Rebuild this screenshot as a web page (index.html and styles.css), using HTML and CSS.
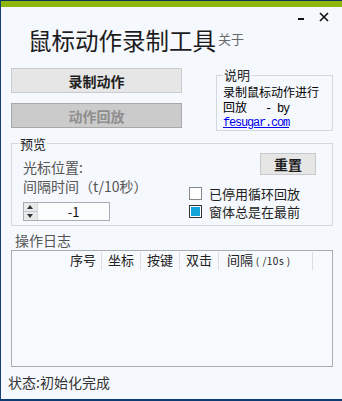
FILE: index.html
```html
<!DOCTYPE html>
<html lang="zh-CN">
<head>
  <meta charset="UTF-8">
  <title>鼠标动作录制工具</title>
  <link rel="stylesheet" href="styles.css">
</head>
<body>

<!-- WINDOW FRAME -->
<div class="window">
  <div class="topbar"></div>

  <!-- WINDOW CONTROLS -->
  <div class="controls">
    <span class="ctl ctl-min">
      <svg width="6" height="2" viewBox="0 0 6 2"><rect width="6" height="2" fill="#111"/></svg>
    </span>
    <span class="ctl ctl-close">
      <svg width="10" height="10" viewBox="0 0 10 10"><path d="M1 1 L9 9 M9 1 L1 9" stroke="#111" stroke-width="1.6"/></svg>
    </span>
  </div>

  <!-- TITLE -->
  <div class="title-row">
    <h1>鼠标动作录制工具</h1>
    <span class="about">关于</span>
  </div>

  <!-- RECORD / PLAY + NOTE -->
  <div class="top-section">
    <div class="actions">
      <button class="btn btn-main">录制动作</button>
      <button class="btn btn-disabled">动作回放</button>
    </div>
    <fieldset class="group note">
      <legend>说明</legend>
      <p>录制鼠标动作进行</p>
      <p>回放<span class="mono">   - by</span></p>
      <p><a class="mono link" href="#">fesugar.com</a></p>
    </fieldset>
  </div>

  <!-- PREVIEW -->
  <fieldset class="group preview">
    <legend>预览</legend>
    <div class="preview-body">
      <div class="preview-left">
        <div class="label">光标位置:</div>
        <div class="label">间隔时间（t/10秒）</div>
        <div class="spinner">
          <div class="spin-btns">
            <span class="spin-up"></span>
            <span class="spin-down"></span>
          </div>
          <div class="spin-value">-1</div>
        </div>
      </div>
      <div class="preview-right">
        <button class="btn btn-reset">重置</button>
        <label class="check"><span class="box"></span>已停用循环回放</label>
        <label class="check"><span class="box checked"></span>窗体总是在最前</label>
      </div>
    </div>
  </fieldset>

  <!-- LOG -->
  <div class="log-title">操作日志</div>
  <div class="log-list">
    <div class="log-head">
      <div class="col col-no">序号</div>
      <div class="col col-pos">坐标</div>
      <div class="col col-key">按键</div>
      <div class="col col-dbl">双击</div>
      <div class="col col-gap">间隔<small> ( /10s )</small></div>
    </div>
  </div>

  <!-- STATUS -->
  <div class="status">状态:初始化完成</div>
</div>

</body>
</html>
```

FILE: styles.css
```css
/* --- Global --- */
body { margin: 0; font-family: "Noto Sans CJK SC", "Noto Sans", sans-serif; }
.window {
  width: 342px; height: 401px; box-sizing: border-box;
  background: #f5f8fc; border-left: 1px solid #163f73; border-bottom: 2px solid #0c3b74;
  padding: 0 9px 0 10px;
}
.topbar { height: 6px; border-top: 1px solid #10335c; background: #8fb80c; margin: 0 -9px 0 -10px; }

/* --- Window controls --- */
.controls { display: flex; justify-content: flex-end; align-items: center; height: 18px; gap: 15px; padding-right: 4px; }
.ctl { display: flex; }
.ctl-min { margin-top: 6px; }
.ctl-close { margin-top: 2px; }

/* --- Title --- */
.title-row { display: flex; align-items: center; height: 30px; padding-left: 17px; }
h1 { margin: 0; font-size: 23.5px; font-weight: 400; color: #1c1c1c; line-height: 30px; }
.about { font-size: 13px; line-height: 16px; color: #6a6a6a; margin: -3px 0 0 2px; }

/* --- Buttons --- */
.top-section { display: flex; justify-content: space-between; align-items: flex-start; margin-top: 13px; }
.actions { display: flex; flex-direction: column; gap: 10px; width: 171px; }
.btn {
  font-family: inherit; font-size: 14px; font-weight: 700; height: 25px; padding: 0;
  border: 1px solid #c9cbcf; background: #e6e6e6; color: #1e1e1e; line-height: 20px;
}
.btn-disabled { background: #cbcbcb; border-color: #a8a8a8; color: #8e8e8e; }
.btn-reset { width: 56px; height: 22px; border-color: #c6c8cb; }

/* --- Group boxes --- */
.group { margin: 0; border: 1px solid #d3d8de; min-width: 0; }
.group legend { font-size: 13px; line-height: 14px; height: 14px; padding: 0 1px; color: #222; }
.note { width: 117px; box-sizing: border-box; padding: 3px 0 1px 6px; }
.note p { margin: 0; height: 14.5px; font-size: 12px; line-height: 14px; color: #000; white-space: pre; overflow: visible; }
.mono { font-family: "Liberation Mono", monospace; font-size: 12px; line-height: 14px; letter-spacing: -1.2px; }
.link { color: #0000ee; text-decoration: underline; }

/* --- Preview --- */
.preview { margin-top: 6px; padding: 0 16px 4px 11px; }
.preview legend { margin-left: -4px; }
.preview-body { display: flex; justify-content: space-between; }
.preview-left { padding-top: 7px; }
.label { font-size: 14px; line-height: 19px; height: 19px; color: #555; }
.spinner { display: flex; width: 87px; height: 19px; box-sizing: border-box; margin-top: 6px; border: 1px solid #a9adb3; background: #fbfcfd; }
.spin-btns { width: 13px; display: flex; flex-direction: column; background: #e8e9eb; border-right: 1px solid #d4d6d9; }
.spin-btns span { flex: 1; position: relative; }
.spin-up { border-bottom: 1px solid #c5c7ca; }
.spin-up::after, .spin-down::after {
  content: ""; position: absolute; left: 3px; top: 2px;
  border-left: 3px solid transparent; border-right: 3px solid transparent;
}
.spin-up::after { border-bottom: 4px solid #333; }
.spin-down::after { border-top: 4px solid #333; }
.spin-value { flex: 1; text-align: center; font-size: 13px; line-height: 17px; color: #111; }
.preview-right { width: 127px; display: flex; flex-direction: column; padding-top: 2px; }
.preview-right .btn-reset { align-self: flex-end; margin-bottom: 10px; }
.check { display: flex; align-items: center; gap: 7px; font-size: 13px; line-height: 18px; height: 18px; color: #222; }
.box { width: 11px; height: 11px; border: 1px solid #888; background: #fff; }
.box.checked { border-color: #333; background: #12a3d8; box-shadow: inset 0 0 0 1px #fff; }

/* --- Log --- */
.log-title { font-size: 14px; line-height: 20px; height: 20px; color: #555; margin: 4px 0 0 4px; }
.log-list { height: 117px; box-sizing: border-box; border: 1px solid #a9adb3; background: #f7fafd; }
.log-head { display: flex; height: 20px; }
.col { font-size: 13px; color: #222; border-right: 1px solid #dcdfe2; box-sizing: border-box; margin: 1px 0; height: 18px; line-height: 16px; }
.col-no { width: 90px; text-align: right; padding-right: 5px; }
.col-pos, .col-key, .col-dbl { width: 39px; text-align: center; }
.col-gap { width: 94px; padding-left: 8px; }
.col small { font-size: 10px; letter-spacing: 0.5px; }

/* --- Status --- */
.status { font-size: 14px; line-height: 20px; color: #333; margin: 5px 0 0 -3px; }
```
